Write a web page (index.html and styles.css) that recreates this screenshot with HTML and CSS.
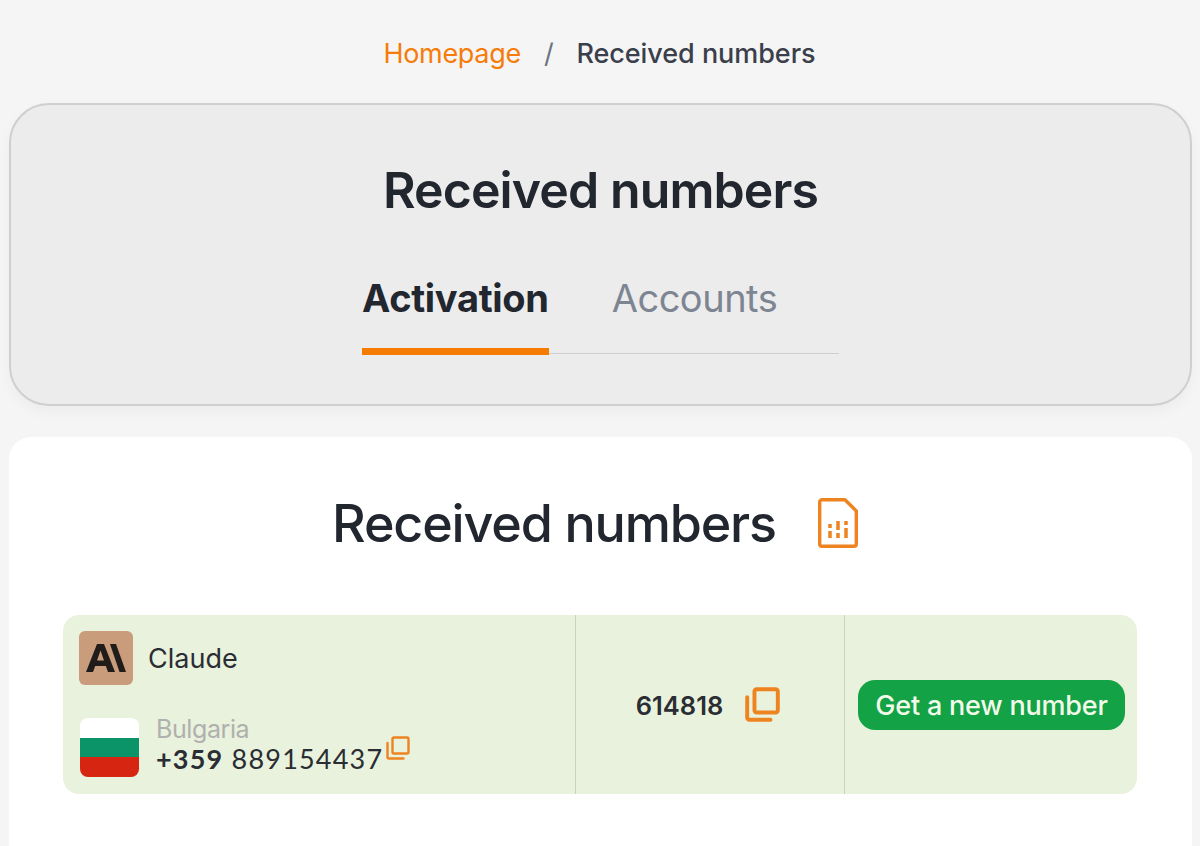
FILE: index.html
```html
<!DOCTYPE html>
<html lang="en">
<head>
<meta charset="utf-8">
<title>Received numbers</title>
<link rel="stylesheet" href="styles.css">
</head>
<body>
<nav class="crumbs"><a class="crumb-link">Homepage</a><span class="crumb-sep">/</span><span class="crumb-current">Received numbers</span></nav>
<section class="hero">
  <h1 class="hero-title">Received numbers</h1>
  <div class="tabs">
    <div class="tab tab-active">Activation</div>
    <div class="tab">Accounts</div>
  </div>
</section>
<main class="panel">
  <div class="panel-head">
    <h2 class="panel-title">Received numbers</h2>
    <svg class="sim-icon" viewBox="0 0 40 50" fill="none" stroke="#ee8420" stroke-width="3.400" stroke-linejoin="round" stroke-linecap="round"><path d="M4 1.700H27L38.300 13V46A2.300 2.300 0 0 1 36 48.300H4A2.300 2.300 0 0 1 1.700 46V4A2.300 2.300 0 0 1 4 1.700Z"/><path d="M12 26V30M12 33V40M20 23V32M20 35V40M28 23V27M28 30V40" stroke-linecap="butt" stroke-width="3.500"/></svg>
  </div>
  <div class="row">
    <div class="cell cell-service">
      <div class="service">
        <div class="logo"><svg viewBox="0 0 40 30" width="40" height="30" fill="#1f1c1a"><path d="M0 29L11 1H18L29 29H22L19.800 23H9.200L7 29ZM11 17.500H18L14.500 7.500Z"/><path d="M24 1H30L40 29H33.500Z"/></svg></div>
        <span class="service-name">Claude</span>
      </div>
      <div class="phone">
        <div class="flag"><span class="flag-white"></span><span class="flag-green"></span><span class="flag-red"></span></div>
        <div class="phone-text">
          <div class="country">Bulgaria</div>
          <div class="number"><b>+359</b> 889154437</div>
        </div>
        <svg class="copy copy-small" viewBox="0 0 24 24" fill="none" stroke="#ee8420" stroke-width="2.400" stroke-linecap="round" stroke-linejoin="round"><rect x="6.500" y="1.500" width="16" height="16" rx="1.500"/><path d="M1.500 7V21A1.500 1.500 0 0 0 3 22.500H17.500"/></svg>
      </div>
    </div>
    <div class="cell cell-code">
      <span class="code">614818</span>
      <svg class="copy copy-large" viewBox="0 0 24 24" fill="none" stroke="#ee8420" stroke-width="2.700" stroke-linecap="round" stroke-linejoin="round"><rect x="6.500" y="1.500" width="16" height="16" rx="1.500"/><path d="M1.500 7V21A1.500 1.500 0 0 0 3 22.500H17.500"/></svg>
    </div>
    <div class="cell cell-action"><button class="new-number">Get a new number</button></div>
  </div>
</main>
</body>
</html>
```
FILE: styles.css
```css
* { box-sizing: border-box; }
html, body { height: 100%; }
body {
  margin: 0;
  padding: 0 8px 0 9px;
  overflow: hidden;
  background: #f5f5f5;
  color: #22262f;
  font-family: Inter, "Noto Sans", sans-serif;
}
.crumbs {
  display: flex;
  justify-content: center;
  align-items: center;
  gap: 23px;
  height: 103px;
  padding: 4px 2px 0 0;
  font-size: 27px;
  letter-spacing: -0.300px;
}
.crumb-link { color: #f57c0a; }
.crumb-sep { color: #6b7280; }
.crumb-current { color: #3a3f4b; font-weight: 500; letter-spacing: -0.050px; }
.hero {
  height: 303px;
  border: 2px solid #cfcfcf;
  border-radius: 40px;
  background: #ececec;
  box-shadow: 0 6px 14px rgba(0, 0, 0, 0.04);
  display: flex;
  flex-direction: column;
  align-items: center;
  padding-top: 53px;
}
.hero-title {
  margin: 0;
  font-size: 50px;
  line-height: 64px;
  font-weight: 600;
  letter-spacing: -0.900px;
  color: #22262f;
}
.tabs {
  display: flex;
  align-items: flex-start;
  gap: 63px;
  width: 477px;
  margin-top: 54px;
  border-bottom: 1px solid #cfcfcf;
}
.tab {
  font-size: 38px;
  line-height: 44px;
  color: #7d8593;
  letter-spacing: -0.500px;
}
.tab-active {
  font-weight: 700;
  color: #22262f;
  border-bottom: 7px solid #f57c00;
  padding-bottom: 28px;
  margin-bottom: -2px;
  letter-spacing: -0.300px;
}
.panel {
  margin-top: 31px;
  height: 409px;
  background: #fff;
  border-radius: 22px 22px 0 0;
  padding: 57px 55px 0 54px;
}
.panel-head {
  display: flex;
  justify-content: center;
  align-items: center;
  gap: 42px;
  height: 60px;
  padding-right: 10px;
}
.panel-title {
  margin: 0;
  font-size: 52px;
  line-height: 60px;
  font-weight: 500;
  letter-spacing: -1.150px;
  color: #22262f;
}
.sim-icon { width: 40px; height: 50px; margin-bottom: 2px; }
.row {
  display: flex;
  height: 179px;
  margin-top: 61px;
  background: #e9f2dc;
  border-radius: 16px;
}
.cell { height: 100%; }
.cell-service {
  width: 513px;
  padding: 16px 0 0 16px;
  border-right: 1px solid #c9d4bb;
}
.service { display: flex; align-items: center; gap: 15px; }
.logo {
  width: 54px;
  height: 54px;
  border-radius: 6px;
  background: #c99c7c;
  display: flex;
  align-items: center;
  justify-content: center;
}
.service-name { font-size: 27px; line-height: 34px; padding-top: 2px; color: #2a2d33; }
.phone { display: flex; align-items: flex-start; margin-top: 33px; }
.flag {
  width: 59px;
  height: 59px;
  border-radius: 8px;
  overflow: hidden;
  display: flex;
  flex-direction: column;
  flex: none;
  margin-left: 1px;
}
.flag span { flex: 1; }
.flag-white { background: #fff; }
.flag-green { background: #0a9468; }
.flag-red { background: #d62612; }
.phone-text { margin: -3px 0 0 17px; }
.country { font-size: 25px; line-height: 29px; color: #b0b0ae; letter-spacing: -0.400px; }
.number { font-size: 27px; line-height: 29px; letter-spacing: 1.200px; color: #2a2d33; font-family: Lato, Inter, sans-serif; }
.number b { font-weight: 700; }
.copy-small { width: 24px; height: 24px; margin: 18px 0 0 3px; }
.cell-code {
  width: 269px;
  border-right: 1px solid #c9d4bb;
  display: flex;
  align-items: center;
  justify-content: center;
  gap: 22px;
  padding-right: 4px;
}
.code { font-size: 25.500px; line-height: 32px; padding-top: 2px; font-weight: 600; color: #2a2d33; }
.copy-large { width: 35px; height: 35px; }
.cell-action {
  flex: 1;
  display: flex;
  align-items: center;
  padding-left: 13px;
}
.new-number {
  width: 267px;
  height: 50px;
  border: 0;
  border-radius: 17px;
  background: #13a245;
  color: #f2fbe9;
  font-family: inherit;
  font-size: 27px;
  line-height: 32px;
  font-weight: 500;
  letter-spacing: -0.200px;
  padding: 2px 0 0;
}
```
